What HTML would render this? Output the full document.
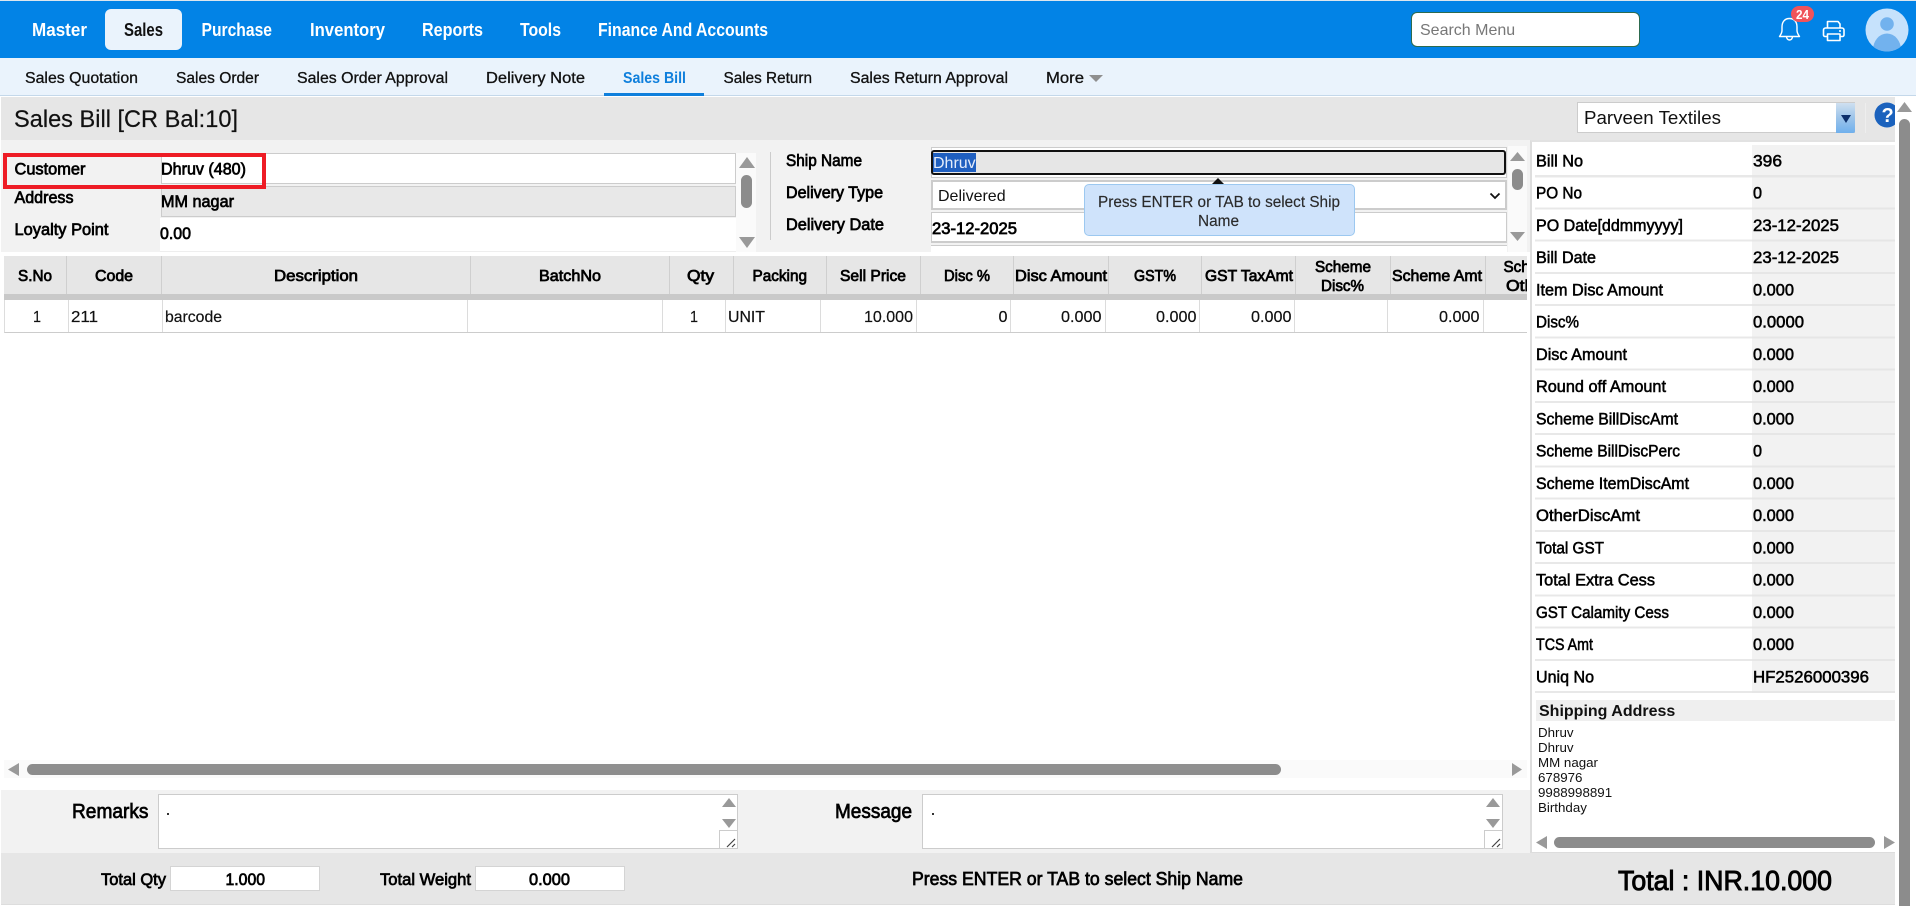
<!DOCTYPE html>
<html lang="en"><head><meta charset="utf-8"><title>Sales Bill</title>
<style>
html,body{margin:0;padding:0;background:#fff;width:1916px;height:906px;overflow:hidden;font-family:"Liberation Sans",sans-serif}
.a{position:absolute;box-sizing:border-box}
svg{position:absolute;left:0;top:0}
text{font-family:"Liberation Sans",sans-serif;fill:#111;white-space:pre}
.n{font-size:18px;font-weight:700;fill:#fff}
.s{font-size:15.5px;stroke:#111;stroke-width:.3px;fill:#111}
.l{font-size:16.5px;font-weight:400;stroke:#000;stroke-width:.7px;fill:#000}
.h{font-size:16px;font-weight:400;stroke:#000;stroke-width:.75px;fill:#000}
.v{font-size:16px;stroke:#111;stroke-width:.2px}
.t{font-size:15.5px;fill:#2a2a2a;stroke:#2a2a2a;stroke-width:.15px}
.p{font-size:17px;stroke:#000;stroke-width:.55px;fill:#000}
.q{font-size:13.33px;fill:#111}
</style></head><body>
<div class="a" style="left:0;top:0;width:1916px;height:1px;background:#dde6ee"></div>
<div class="a" style="left:0;top:1px;width:1916px;height:57px;background:#0283e6"></div>
<div class="a" style="left:105px;top:9px;width:77px;height:41px;background:#eaf3fc;border-radius:6px"></div>
<div class="a" style="left:1411px;top:12px;width:229px;height:35px;background:#fff;border:1px solid #2d6b4f;border-radius:6px"></div>
<div class="a" style="left:0;top:58px;width:1916px;height:38px;background:#eaf3fc;border-bottom:1px solid #c4d8ea"></div>
<div class="a" style="left:604px;top:93px;width:100px;height:3px;background:#0f7fdc"></div>
<div class="a" style="left:1px;top:97px;width:1894px;height:43px;background:#e6e6e6"></div>
<div class="a" style="left:1865px;top:103px;width:1px;height:30px;background:#eee"></div>
<div class="a" style="left:1577px;top:102px;width:278px;height:31px;background:#fff;border:1px solid #ccc"></div>
<div class="a" style="left:1836px;top:103px;width:19px;height:30px;background:linear-gradient(#cfe0f0,#9cc4ea 50%,#6fb0ec);border-radius:0 0 2px 0"></div>

<div class="a" style="left:1px;top:140px;width:1529px;height:112px;background:#f2f2f2"></div>
<div class="a" style="left:161px;top:153px;width:575px;height:31px;background:#fff;border:1px solid #ccc"></div>
<div class="a" style="left:161px;top:186px;width:575px;height:31px;background:#e8e8e8;border:1px solid #ccc"></div>
<div class="a" style="left:160px;top:218px;width:576px;height:34px;background:#fff;border-bottom:1px solid #eee"></div>
<div class="a" style="left:736px;top:153px;width:20px;height:99px;background:#fafafa"></div>
<div class="a" style="left:741px;top:175px;width:11px;height:33px;background:#8c8c8c;border-radius:6px"></div>
<div class="a" style="left:770px;top:152px;width:1px;height:88px;background:#ccc"></div>

<div class="a" style="left:931px;top:147px;width:576px;height:31px;border:1px solid #ccc;background:#fff"></div>
<div class="a" style="left:931px;top:150px;width:575px;height:25px;background:#e6e6e6;border:2px solid #111;border-radius:3px"></div>
<div class="a" style="left:933px;top:153px;width:43px;height:19px;background:#1f5fc0"></div>
<div class="a" style="left:931px;top:180px;width:576px;height:30px;background:#fff;border:2px solid #ccc"></div>
<div class="a" style="left:931px;top:212px;width:576px;height:31px;background:#fff;border:1px solid #ccc;border-bottom-width:2px"></div>
<div class="a" style="left:931px;top:245px;width:576px;height:7px;background:#fff;border-top:1px solid #ccc"></div>
<div class="a" style="left:1508px;top:146px;width:19px;height:106px;background:#fafafa"></div>
<div class="a" style="left:1512px;top:169px;width:11px;height:21px;background:#8c8c8c;border-radius:6px"></div>
<div class="a" style="left:1084px;top:184px;width:271px;height:52px;background:#cfe3fb;border:1px solid #9cc8f0;border-radius:5px"></div>

<div class="a" style="left:4px;top:256px;width:1523px;height:38px;background:#e6e6e6"></div>
<div class="a" style="left:4px;top:294px;width:1523px;height:6px;background:#c9c9c9"></div>
<div class="a" style="left:4px;top:300px;width:1523px;height:33px;background:#fff;border-bottom:1px solid #ccc;border-left:1px solid #ddd"></div>

<div class="a" style="left:4px;top:760px;width:1523px;height:18px;background:#fafafa"></div>
<div class="a" style="left:27px;top:764px;width:1254px;height:11px;background:#8c8c8c;border-radius:6px"></div>

<div class="a" style="left:1px;top:790px;width:1529px;height:63px;background:#f2f2f2"></div>
<div class="a" style="left:158px;top:794px;width:580px;height:55px;background:#fff;border:1px solid #ccc"></div>
<div class="a" style="left:719px;top:830px;width:19px;height:19px;background:#fff;border:1px solid #ccc"></div>
<div class="a" style="left:922px;top:794px;width:581px;height:55px;background:#fff;border:1px solid #ccc"></div>
<div class="a" style="left:1484px;top:830px;width:19px;height:19px;background:#fff;border:1px solid #ccc"></div>

<div class="a" style="left:1530px;top:140px;width:365px;height:714px;background:#fff;border-left:2px solid #ddd;border-top:2px solid #e2e2e2;border-bottom:2px solid #ddd"></div>
<div class="a" style="left:1535px;top:145px;width:217px;height:548px;background:repeating-linear-gradient(#fff 0,#fff 30.25px,#e8e8e8 30.25px,#e8e8e8 32.25px)"></div>
<div class="a" style="left:1752px;top:145px;width:143px;height:548px;background:repeating-linear-gradient(#f2f2f2 0,#f2f2f2 30.25px,#e6e6e6 30.25px,#e6e6e6 32.25px)"></div>
<div class="a" style="left:1536px;top:700px;width:359px;height:21px;background:#efefef"></div>
<div class="a" style="left:1554px;top:837px;width:321px;height:11px;background:#8c8c8c;border-radius:6px"></div>

<div class="a" style="left:1px;top:853px;width:1894px;height:52px;background:#e6e6e6;border-bottom:1px solid #ddd"></div>
<div class="a" style="left:170px;top:866px;width:150px;height:25px;background:#fff;border:1px solid #d4d4d4"></div>
<div class="a" style="left:475px;top:866px;width:150px;height:25px;background:#fff;border:1px solid #d4d4d4"></div>

<div class="a" style="left:1899px;top:119px;width:11px;height:787px;background:#8c8c8c;border-radius:6px 6px 0 0"></div>

<svg width="1916" height="906" viewBox="0 0 1916 906" xmlns="http://www.w3.org/2000/svg">
<defs>
<clipPath id="hc"><rect x="1485" y="256" width="42" height="38"/></clipPath>
<clipPath id="av"><circle cx="1887" cy="30" r="21.5"/></clipPath>
<clipPath id="hl"><rect x="1860" y="100" width="35" height="40"/></clipPath>
</defs>
<!-- nav -->
<text class="n" x="32" y="36" textLength="55" lengthAdjust="spacingAndGlyphs">Master</text>
<text class="n" x="124" y="36" textLength="39" lengthAdjust="spacingAndGlyphs" style="fill:#111">Sales</text>
<text class="n" x="201.5" y="36" textLength="70.5" lengthAdjust="spacingAndGlyphs">Purchase</text>
<text class="n" x="310" y="36" textLength="75" lengthAdjust="spacingAndGlyphs">Inventory</text>
<text class="n" x="422" y="36" textLength="61" lengthAdjust="spacingAndGlyphs">Reports</text>
<text class="n" x="520" y="36" textLength="41" lengthAdjust="spacingAndGlyphs">Tools</text>
<text class="n" x="598" y="36" textLength="170" lengthAdjust="spacingAndGlyphs">Finance And Accounts</text>
<text x="1420" y="35" style="font-size:16px;fill:#777">Search Menu</text>
<!-- bell -->
<path d="M1789.5 18.5c-5 0-7.5 3.6-7.5 8.5v3.5c0 2.5-1.500 4.500-2.500 6h20c-1-1.500-2.500-3.500-2.500-6V27c0-4.900-2.500-8.500-7.500-8.500zM1786.500 36.500c0 2 1.300 3.500 3 3.500s3-1.500 3-3.500" fill="none" stroke="#fff" stroke-width="1.400" stroke-linejoin="round"/>
<rect x="1791" y="6" width="23" height="16" rx="8" fill="#f0535a"/>
<text x="1796" y="19" style="font-size:12.5px;fill:#fff;font-weight:700" textLength="13" lengthAdjust="spacingAndGlyphs">24</text>
<!-- printer -->
<g fill="none" stroke="#fff" stroke-width="1.6" stroke-linejoin="round">
<path d="M1827.500 28v-6.500h10.500l2 2.500v4"/>
<path d="M1827.500 36.500h-2.500a1.500 1.500 0 0 1-1.500-1.500v-5a2 2 0 0 1 2-2h16.500a2 2 0 0 1 2 2v5a1.500 1.500 0 0 1-1.500 1.500h-2.500"/>
<path d="M1827.500 34h12.500v6.500h-12.500z"/>
</g>
<circle cx="1840" cy="31" r="1" fill="#fff"/>
<!-- avatar -->
<circle cx="1887" cy="30" r="21.5" fill="#c6e2fc"/>
<g clip-path="url(#av)"><circle cx="1887" cy="24" r="6.8" fill="#72b2ee"/><ellipse cx="1887" cy="50" rx="14" ry="16.5" fill="#72b2ee"/></g>
<!-- subnav -->
<text class="s" x="25" y="83" textLength="113" lengthAdjust="spacingAndGlyphs">Sales Quotation</text>
<text class="s" x="176" y="83" textLength="83" lengthAdjust="spacingAndGlyphs">Sales Order</text>
<text class="s" x="297" y="83" textLength="151" lengthAdjust="spacingAndGlyphs">Sales Order Approval</text>
<text class="s" x="486" y="83" textLength="99" lengthAdjust="spacingAndGlyphs">Delivery Note</text>
<text x="623" y="83" textLength="63" lengthAdjust="spacingAndGlyphs" style="font-size:15.5px;font-weight:700;fill:#0f7fdc">Sales Bill</text>
<text class="s" x="723.5" y="83" textLength="88.5" lengthAdjust="spacingAndGlyphs">Sales Return</text>
<text class="s" x="850" y="83" textLength="158" lengthAdjust="spacingAndGlyphs">Sales Return Approval</text>
<text class="s" x="1046" y="83" textLength="38" lengthAdjust="spacingAndGlyphs">More</text>
<polygon points="1089,75 1103,75 1096,82" fill="#8f8f8f"/>
<!-- title -->
<text x="14" y="127" textLength="224" lengthAdjust="spacingAndGlyphs" style="font-size:24.5px;fill:#111;stroke:#111;stroke-width:.2px">Sales Bill [CR Bal:10]</text>
<text x="1584" y="124" textLength="137" lengthAdjust="spacingAndGlyphs" style="font-size:18.4px">Parveen Textiles</text>
<polygon points="1841,115 1851,115 1846,123" fill="#0d2f6b"/>
<g clip-path="url(#hl)"><circle cx="1887" cy="115" r="12.5" fill="#1b62bd"/>
<text x="1881.500" y="122" style="font-size:20px;font-weight:700;fill:#fff">?</text></g>
<!-- customer -->
<text class="l" x="14.500" y="174.500" textLength="71" lengthAdjust="spacingAndGlyphs">Customer</text>
<text class="l" x="161" y="174.500" textLength="85" lengthAdjust="spacingAndGlyphs">Dhruv (480)</text>
<text class="l" x="14.500" y="203" textLength="59" lengthAdjust="spacingAndGlyphs">Address</text>
<text class="l" x="161" y="207" textLength="73" lengthAdjust="spacingAndGlyphs">MM nagar</text>
<text class="l" x="14.500" y="235" textLength="94" lengthAdjust="spacingAndGlyphs">Loyalty Point</text>
<text class="l" x="160" y="239" textLength="31" lengthAdjust="spacingAndGlyphs">0.00</text>
<rect x="5" y="155" width="259" height="32" fill="none" stroke="#ee1c25" stroke-width="4"/>
<polygon points="747,157 755,168 739,168" fill="#999"/>
<polygon points="739,237 755,237 747,248" fill="#999"/>
<!-- ship -->
<text class="l" x="786" y="166" textLength="76" lengthAdjust="spacingAndGlyphs">Ship Name</text>
<text class="l" x="786" y="198" textLength="97" lengthAdjust="spacingAndGlyphs">Delivery Type</text>
<text class="l" x="786" y="230" textLength="98" lengthAdjust="spacingAndGlyphs">Delivery Date</text>
<text x="933" y="168" style="font-size:16px;fill:#e4ecfa">Dhruv</text>
<text x="938" y="201" style="font-size:16px;fill:#111">Delivered</text>
<path d="M1490.500 193.500l4.500 4.500 4.500-4.500" fill="none" stroke="#111" stroke-width="1.8"/>
<text class="l" x="932" y="234" textLength="85" lengthAdjust="spacingAndGlyphs">23-12-2025</text>
<polygon points="1510,161 1525,161 1517.500,152" fill="#999"/>
<polygon points="1510,232 1525,232 1517.500,241" fill="#999"/>
<polygon points="1218,178 1224,184 1212,184" fill="#111"/>
<text class="t" x="1098" y="207" textLength="242" lengthAdjust="spacingAndGlyphs">Press ENTER or TAB to select Ship</text>
<text class="t" x="1198" y="226" textLength="41" lengthAdjust="spacingAndGlyphs">Name</text>
<!-- table separators -->
<g stroke="#cfcfcf" stroke-width="1">
<path d="M66.5 256v38M161.5 256v38M470.5 256v38M669.5 256v38M733.5 256v38M826.5 256v38M920.5 256v38M1013.5 256v38M1108.5 256v38M1201.5 256v38M1295.5 256v38M1390.5 256v38M1485.5 256v38"/>
</g>
<g stroke="#dcdcdc" stroke-width="1">
<path d="M68.5 300v32M162.5 300v32M467.5 300v32M662.5 300v32M725.5 300v32M820.5 300v32M916.5 300v32M1010.5 300v32M1105.5 300v32M1199.5 300v32M1294.5 300v32M1387.5 300v32M1483.5 300v32"/>
</g>
<text class="h" x="18" y="281" textLength="34" lengthAdjust="spacingAndGlyphs">S.No</text>
<text class="h" x="95" y="281" textLength="38" lengthAdjust="spacingAndGlyphs">Code</text>
<text class="h" x="274" y="281" textLength="84" lengthAdjust="spacingAndGlyphs">Description</text>
<text class="h" x="539" y="281" textLength="62" lengthAdjust="spacingAndGlyphs">BatchNo</text>
<text class="h" x="687" y="281" textLength="27" lengthAdjust="spacingAndGlyphs">Qty</text>
<text class="h" x="752.5" y="281" textLength="54.5" lengthAdjust="spacingAndGlyphs">Packing</text>
<text class="h" x="840" y="281" textLength="66" lengthAdjust="spacingAndGlyphs">Sell Price</text>
<text class="h" x="944" y="281" textLength="46" lengthAdjust="spacingAndGlyphs">Disc %</text>
<text class="h" x="1015" y="281" textLength="92" lengthAdjust="spacingAndGlyphs">Disc Amount</text>
<text class="h" x="1134" y="281" textLength="42" lengthAdjust="spacingAndGlyphs">GST%</text>
<text class="h" x="1205" y="281" textLength="88" lengthAdjust="spacingAndGlyphs">GST TaxAmt</text>
<text class="h" x="1315" y="272" textLength="56" lengthAdjust="spacingAndGlyphs">Scheme</text>
<text class="h" x="1321" y="291" textLength="43" lengthAdjust="spacingAndGlyphs">Disc%</text>
<text class="h" x="1392" y="281" textLength="90" lengthAdjust="spacingAndGlyphs">Scheme Amt</text>
<g clip-path="url(#hc)">
<text class="h" x="1503.5" y="272" textLength="56" lengthAdjust="spacingAndGlyphs">Scheme</text>
<text class="h" x="1506" y="291" textLength="44" lengthAdjust="spacingAndGlyphs">Other</text>
</g>
<text class="v" x="33" y="322" textLength="8" lengthAdjust="spacingAndGlyphs">1</text>
<text class="v" x="71" y="322" textLength="27" lengthAdjust="spacingAndGlyphs">211</text>
<text class="v" x="165" y="322" textLength="57" lengthAdjust="spacingAndGlyphs">barcode</text>
<text class="v" x="690" y="322" textLength="8" lengthAdjust="spacingAndGlyphs">1</text>
<text class="v" x="728" y="322" textLength="37" lengthAdjust="spacingAndGlyphs">UNIT</text>
<text class="v" x="864" y="322" textLength="49" lengthAdjust="spacingAndGlyphs">10.000</text>
<text class="v" x="998.500" y="322" textLength="9" lengthAdjust="spacingAndGlyphs">0</text>
<text class="v" x="1061" y="322" textLength="40.5" lengthAdjust="spacingAndGlyphs">0.000</text>
<text class="v" x="1156" y="322" textLength="40.5" lengthAdjust="spacingAndGlyphs">0.000</text>
<text class="v" x="1251" y="322" textLength="40.5" lengthAdjust="spacingAndGlyphs">0.000</text>
<text class="v" x="1439" y="322" textLength="40.5" lengthAdjust="spacingAndGlyphs">0.000</text>
<!-- scroll arrows -->
<polygon points="8,769.5 19,763 19,776" fill="#999"/>
<polygon points="1522,769.5 1512,763 1512,776" fill="#999"/>
<polygon points="1536,842.5 1547,836 1547,849" fill="#999"/>
<polygon points="1895,842.5 1884,836 1884,849" fill="#999"/>
<polygon points="1897,112 1912,112 1904.5,102" fill="#999"/>
<!-- remarks -->
<text x="72" y="818" textLength="76.5" lengthAdjust="spacingAndGlyphs" style="font-size:20px;stroke:#000;stroke-width:.7px;fill:#000">Remarks</text>
<text x="835" y="818" textLength="77" lengthAdjust="spacingAndGlyphs" style="font-size:20px;stroke:#000;stroke-width:.7px;fill:#000">Message</text>
<rect x="167" y="813" width="2" height="2" fill="#333"/>
<rect x="932" y="813" width="2" height="2" fill="#333"/>
<polygon points="729,798 736,807 722,807" fill="#999"/>
<polygon points="722,819 736,819 729,828" fill="#999"/>
<polygon points="1493,798 1500,807 1486,807" fill="#999"/>
<polygon points="1486,819 1500,819 1493,828" fill="#999"/>
<path d="M727 847l8-8M732 847l3-3" stroke="#444" stroke-width="1.2"/>
<path d="M1492 847l8-8M1497 847l3-3" stroke="#444" stroke-width="1.2"/>
<!-- footer -->
<text class="l" x="101" y="885" textLength="65" lengthAdjust="spacingAndGlyphs">Total Qty</text>
<text class="l" x="225.5" y="885" textLength="39.5" lengthAdjust="spacingAndGlyphs">1.000</text>
<text class="l" x="380" y="885" textLength="91" lengthAdjust="spacingAndGlyphs">Total Weight</text>
<text class="l" x="529" y="885" textLength="41" lengthAdjust="spacingAndGlyphs">0.000</text>
<text x="912" y="885" textLength="331" lengthAdjust="spacingAndGlyphs" style="font-size:18px;stroke:#000;stroke-width:.7px;fill:#000">Press ENTER or TAB to select Ship Name</text>
<text x="1618" y="890" textLength="214" lengthAdjust="spacingAndGlyphs" style="font-size:28px;stroke:#000;stroke-width:.9px;fill:#000">Total : INR.10.000</text>
<!-- right panel labels -->
<text class="p" x="1536" y="166.500" textLength="47" lengthAdjust="spacingAndGlyphs">Bill No</text>
<text class="p" x="1536" y="198.500" textLength="46" lengthAdjust="spacingAndGlyphs">PO No</text>
<text class="p" x="1536" y="230.750" textLength="147" lengthAdjust="spacingAndGlyphs">PO Date[ddmmyyyy]</text>
<text class="p" x="1536" y="263" textLength="60" lengthAdjust="spacingAndGlyphs">Bill Date</text>
<text class="p" x="1536" y="295.250" textLength="127" lengthAdjust="spacingAndGlyphs">Item Disc Amount</text>
<text class="p" x="1536" y="327.500" textLength="43" lengthAdjust="spacingAndGlyphs">Disc%</text>
<text class="p" x="1536" y="359.750" textLength="91" lengthAdjust="spacingAndGlyphs">Disc Amount</text>
<text class="p" x="1536" y="392" textLength="130" lengthAdjust="spacingAndGlyphs">Round off Amount</text>
<text class="p" x="1536" y="424.250" textLength="142" lengthAdjust="spacingAndGlyphs">Scheme BillDiscAmt</text>
<text class="p" x="1536" y="456.500" textLength="144" lengthAdjust="spacingAndGlyphs">Scheme BillDiscPerc</text>
<text class="p" x="1536" y="488.750" textLength="153" lengthAdjust="spacingAndGlyphs">Scheme ItemDiscAmt</text>
<text class="p" x="1536" y="521" textLength="104" lengthAdjust="spacingAndGlyphs">OtherDiscAmt</text>
<text class="p" x="1536" y="553.250" textLength="68" lengthAdjust="spacingAndGlyphs">Total GST</text>
<text class="p" x="1536" y="585.500" textLength="119" lengthAdjust="spacingAndGlyphs">Total Extra Cess</text>
<text class="p" x="1536" y="617.750" textLength="133" lengthAdjust="spacingAndGlyphs">GST Calamity Cess</text>
<text class="p" x="1536" y="650" textLength="57" lengthAdjust="spacingAndGlyphs">TCS Amt</text>
<text class="p" x="1536" y="682.500" textLength="58" lengthAdjust="spacingAndGlyphs">Uniq No</text>
<!-- right panel values -->
<text class="p" x="1753" y="166.500" textLength="29" lengthAdjust="spacingAndGlyphs">396</text>
<text class="p" x="1753" y="198.500" textLength="9" lengthAdjust="spacingAndGlyphs">0</text>
<text class="p" x="1753" y="230.750" textLength="86" lengthAdjust="spacingAndGlyphs">23-12-2025</text>
<text class="p" x="1753" y="263" textLength="86" lengthAdjust="spacingAndGlyphs">23-12-2025</text>
<text class="p" x="1753" y="295.250" textLength="41" lengthAdjust="spacingAndGlyphs">0.000</text>
<text class="p" x="1753" y="327.500" textLength="51" lengthAdjust="spacingAndGlyphs">0.0000</text>
<text class="p" x="1753" y="359.750" textLength="41" lengthAdjust="spacingAndGlyphs">0.000</text>
<text class="p" x="1753" y="392" textLength="41" lengthAdjust="spacingAndGlyphs">0.000</text>
<text class="p" x="1753" y="424.250" textLength="41" lengthAdjust="spacingAndGlyphs">0.000</text>
<text class="p" x="1753" y="456.500" textLength="9" lengthAdjust="spacingAndGlyphs">0</text>
<text class="p" x="1753" y="488.750" textLength="41" lengthAdjust="spacingAndGlyphs">0.000</text>
<text class="p" x="1753" y="521" textLength="41" lengthAdjust="spacingAndGlyphs">0.000</text>
<text class="p" x="1753" y="553.250" textLength="41" lengthAdjust="spacingAndGlyphs">0.000</text>
<text class="p" x="1753" y="585.500" textLength="41" lengthAdjust="spacingAndGlyphs">0.000</text>
<text class="p" x="1753" y="617.750" textLength="41" lengthAdjust="spacingAndGlyphs">0.000</text>
<text class="p" x="1753" y="650" textLength="41" lengthAdjust="spacingAndGlyphs">0.000</text>
<text class="p" x="1753" y="682.500" textLength="116" lengthAdjust="spacingAndGlyphs">HF2526000396</text>
<!-- shipping -->
<text x="1539" y="716" style="font-size:16px;font-weight:700">Shipping Address</text>
<text class="q" x="1538" y="737">Dhruv</text>
<text class="q" x="1538" y="752">Dhruv</text>
<text class="q" x="1538" y="767">MM nagar</text>
<text class="q" x="1538" y="782">678976</text>
<text class="q" x="1538" y="797">9988998891</text>
<text class="q" x="1538" y="812">Birthday</text>
</svg>
</body></html>
